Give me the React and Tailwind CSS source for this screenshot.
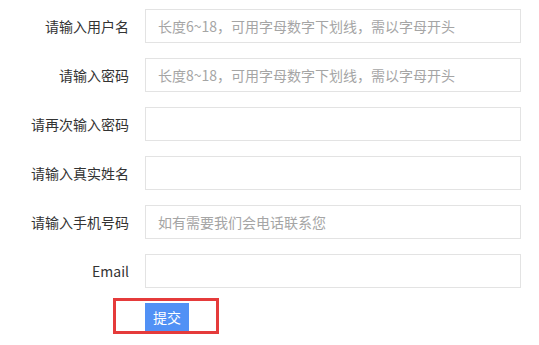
import React from "react";

const rows = [
  { label: "请输入用户名", ph: "长度6~18，可用字母数字下划线，需以字母开头" },
  { label: "请输入密码", ph: "长度8~18，可用字母数字下划线，需以字母开头" },
  { label: "请再次输入密码", ph: "" },
  { label: "请输入真实姓名", ph: "" },
  { label: "请输入手机号码", ph: "如有需要我们会电话联系您" },
  { label: "Email", ph: "" },
];

export default function App() {
  return (
    <div
      className="w-[539px] h-[345px] bg-white pt-[9px] text-[14px] text-[#333]"
      style={{ fontFamily: '"Noto Sans CJK SC", "Noto Sans", sans-serif' }}
    >
      <div className="flex flex-col gap-[15px]">
        {rows.map((r) => (
          <div key={r.label} className="flex items-center">
            <div className="w-[129px] text-right leading-none">{r.label}</div>
            <div className="ml-[16px] w-[376px] h-[34px] border border-[#e3e3e3] flex items-center pl-[12px] text-[#a5a5a5] leading-none">
              {r.ph}
            </div>
          </div>
        ))}
      </div>
      <div className="mt-[10px] ml-[113px] w-[106px] h-[36px] border-[3px] border-[#e53b3b] pl-[29px] pt-[2px]">
        <div className="w-[44px] h-[28px] bg-[#5191f5] text-white flex items-center justify-center leading-none">
          提交
        </div>
      </div>
    </div>
  );
}
